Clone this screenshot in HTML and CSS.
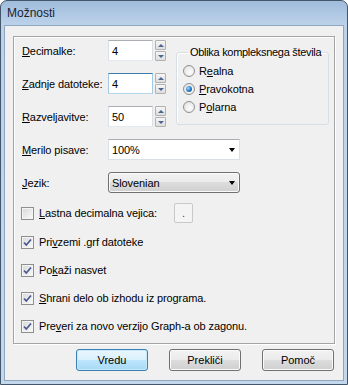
FILE: index.html
```html
<!DOCTYPE html>
<html lang="sl">
<head>
  <meta charset="UTF-8">
  <title>Možnosti</title>
  <link rel="stylesheet" href="styles.css">
</head>
<body>
  <div class="window">
    <div class="titlebar">Možnosti</div>
    <div class="client">
      <div class="group">
        <div class="top">
          <div class="fields">
            <div class="row">
              <span class="lbl"><u>D</u>ecimalke:</span>
              <span class="edit">4</span>
              <span class="spin"><span class="up"></span><span class="down"></span></span>
            </div>
            <div class="row">
              <span class="lbl"><u>Z</u>adnje datoteke:</span>
              <span class="edit focused">4</span>
              <span class="spin"><span class="up"></span><span class="down"></span></span>
            </div>
            <div class="row">
              <span class="lbl"><u>R</u>azveljavitve:</span>
              <span class="edit">50</span>
              <span class="spin"><span class="up"></span><span class="down"></span></span>
            </div>
          </div>
          <fieldset class="radios">
            <legend>Oblika kompleksnega števila</legend>
            <div class="radio"><span class="rb"></span><span>R<u>e</u>alna</span></div>
            <div class="radio"><span class="rb on"></span><span><u>P</u>ravokotna</span></div>
            <div class="radio"><span class="rb"></span><span>P<u>o</u>larna</span></div>
          </fieldset>
        </div>
        <div class="fields combos">
          <div class="row">
            <span class="lbl"><u>M</u>erilo pisave:</span>
            <span class="combo">100%<span class="arrow"></span></span>
          </div>
          <div class="row">
            <span class="lbl"><u>J</u>ezik:</span>
            <span class="combo list">Slovenian<span class="arrow"></span></span>
          </div>
        </div>
        <div class="checks">
          <div class="check first">
            <span class="cb"></span>
            <span class="check-text"><u>L</u>astna decimalna vejica:</span>
            <span class="dot-box">.</span>
          </div>
          <div class="check">
            <span class="cb"><svg width="11" height="11" viewBox="0 0 11 11"><path d="M2 5.5 L4.3 8 L9 2.5" fill="none" stroke="#4a5b8f" stroke-width="1.7"/></svg></span>
            <span>Pri<u>v</u>zemi .grf datoteke</span>
          </div>
          <div class="check">
            <span class="cb"><svg width="11" height="11" viewBox="0 0 11 11"><path d="M2 5.5 L4.3 8 L9 2.5" fill="none" stroke="#4a5b8f" stroke-width="1.7"/></svg></span>
            <span>Po<u>k</u>aži nasvet</span>
          </div>
          <div class="check">
            <span class="cb"><svg width="11" height="11" viewBox="0 0 11 11"><path d="M2 5.5 L4.3 8 L9 2.5" fill="none" stroke="#4a5b8f" stroke-width="1.7"/></svg></span>
            <span><u>S</u>hrani delo ob izhodu iz programa.</span>
          </div>
          <div class="check">
            <span class="cb"><svg width="11" height="11" viewBox="0 0 11 11"><path d="M2 5.5 L4.3 8 L9 2.5" fill="none" stroke="#4a5b8f" stroke-width="1.7"/></svg></span>
            <span>Pre<u>v</u>eri za novo verzijo Graph-a ob zagonu.</span>
          </div>
        </div>
      </div>
      <div class="buttons">
        <button class="btn default">Vredu</button>
        <button class="btn">Prekliči</button>
        <button class="btn">Pomoč</button>
      </div>
    </div>
  </div>
</body>
</html>
```

FILE: styles.css
```css
body { margin: 0; font-family: "Liberation Sans", Arial, sans-serif; font-size: 11px; letter-spacing: -0.1px; color: #000; }
u { text-decoration: underline; text-underline-offset: 1px; }

.window { width: 348px; height: 385px; box-sizing: border-box; border: 1px solid #44566b; border-radius: 7px 7px 0 0; background: linear-gradient(#a0bcdb, #bcd2ea 24px, #c3d8ed); display: flex; flex-direction: column; overflow: hidden; }
.titlebar { height: 24px; line-height: 24px; padding-left: 6px; font-size: 12px; letter-spacing: 0; color: #1b2230; }
.client { flex: 1; margin: 0 3px 3px; border: 1px solid #8fa6bf; background: #f0f0f0; }

.group { margin: 10px 8px 0; height: 308px; box-sizing: border-box; border: 1px solid #a4a4a4; box-shadow: inset 1px 1px 0 #fff, 1px 1px 0 #fff; padding: 3px 0 0 8px; }
.top { display: flex; align-items: flex-start; }
.fields { display: flex; flex-direction: column; gap: 12px; }
.combos { margin-top: 12px; }
.row { display: flex; align-items: center; height: 21px; }
.lbl { width: 86px; }

.edit { width: 45px; height: 21px; box-sizing: border-box; border: 1px solid #abadb3; border-bottom-color: #e3e9ef; border-left-color: #dbdfe6; border-right-color: #dbdfe6; background: #fff; padding-left: 3px; display: flex; align-items: center; }
.edit.focused { border-color: #3d7bad; border-bottom-color: #b7d9ed; border-left-color: #a4c9e3; border-right-color: #a4c9e3; }
.spin { margin-left: 2px; width: 11px; height: 21px; display: flex; flex-direction: column; gap: 1px; }
.spin span { flex: 1; border: 1px solid #b1b1b1; border-radius: 1px; background: linear-gradient(#f6f6f6, #dedede); display: flex; align-items: center; justify-content: center; }
.spin .up::after { content: ""; border-left: 3px solid transparent; border-right: 3px solid transparent; border-bottom: 3px solid #4c6591; }
.spin .down::after { content: ""; border-left: 3px solid transparent; border-right: 3px solid transparent; border-top: 3px solid #4c6591; }

.combo { width: 132px; height: 21px; box-sizing: border-box; border: 1px solid #dbdfe6; border-top-color: #abadb3; background: #fff; padding-left: 3px; display: flex; align-items: center; justify-content: space-between; }
.combo.list { border: 1px solid #707070; border-radius: 3px; background: linear-gradient(#f2f2f2, #ebebeb 50%, #dddddd 50%, #cfcfcf); box-shadow: inset 0 0 0 1px #fafafa; }
.arrow { margin-right: 4px; border-left: 3.5px solid transparent; border-right: 3.5px solid transparent; border-top: 4px solid #000; }

.radios { margin: 6px 0 0 10px; width: 153px; min-width: 0; flex: none; box-sizing: border-box; height: 79px; border: 1px solid #d5dfe5; border-radius: 3px; padding: 3px 0 0 6px; box-shadow: inset 1px 1px 0 #fff; }
.radios legend { margin-left: 5px; padding: 0 2px; line-height: 13px; white-space: nowrap; letter-spacing: -0.3px; }
.radio { display: flex; align-items: center; gap: 4px; height: 18px; }
.rb { width: 12px; height: 12px; box-sizing: border-box; border: 1px solid #8e8f8f; border-radius: 50%; background: radial-gradient(circle at 60% 60%, #fdfdfd, #dcdcdc); display: flex; align-items: center; justify-content: center; }
.rb.on::after { content: ""; width: 6px; height: 6px; border-radius: 50%; background: radial-gradient(circle at 35% 35%, #9bdcff, #2a78c2 55%, #0f3f80); }

.checks { margin-top: 10px; display: flex; flex-direction: column; gap: 8px; }
.check { display: flex; align-items: center; height: 20px; }
.check.first { margin-bottom: 1px; }
.cb { width: 13px; height: 13px; box-sizing: border-box; margin: 0 5px 0 -1px; border: 1px solid #8e8f8f; background: linear-gradient(135deg, #d8d8d8, #fafafa); box-shadow: inset 0 0 0 1px #f4f4f4; display: flex; align-items: center; justify-content: center; }
.check-text { width: 135px; }
.dot-box { width: 19px; height: 20px; box-sizing: border-box; border: 1px solid #c9c9c9; border-radius: 2px; background: #f4f4f4; display: flex; align-items: center; justify-content: center; color: #444; }

.buttons { display: flex; justify-content: flex-end; gap: 21px; margin: 5px 9px 0 0; }
.btn { width: 72px; height: 22px; font-family: inherit; font-size: 11px; color: #000; border: 1px solid #707070; border-radius: 3px; background: linear-gradient(#f2f2f2, #ebebeb 50%, #dddddd 50%, #cfcfcf); box-shadow: inset 0 0 0 1px #fbfbfb; padding: 0; }
.btn.default { border-color: #3c7fb1; background: linear-gradient(#eaf6fd, #d9f0fc 50%, #bee6fd 50%, #a7d9f5); box-shadow: inset 0 0 0 1px #c8e9fc; }
```
